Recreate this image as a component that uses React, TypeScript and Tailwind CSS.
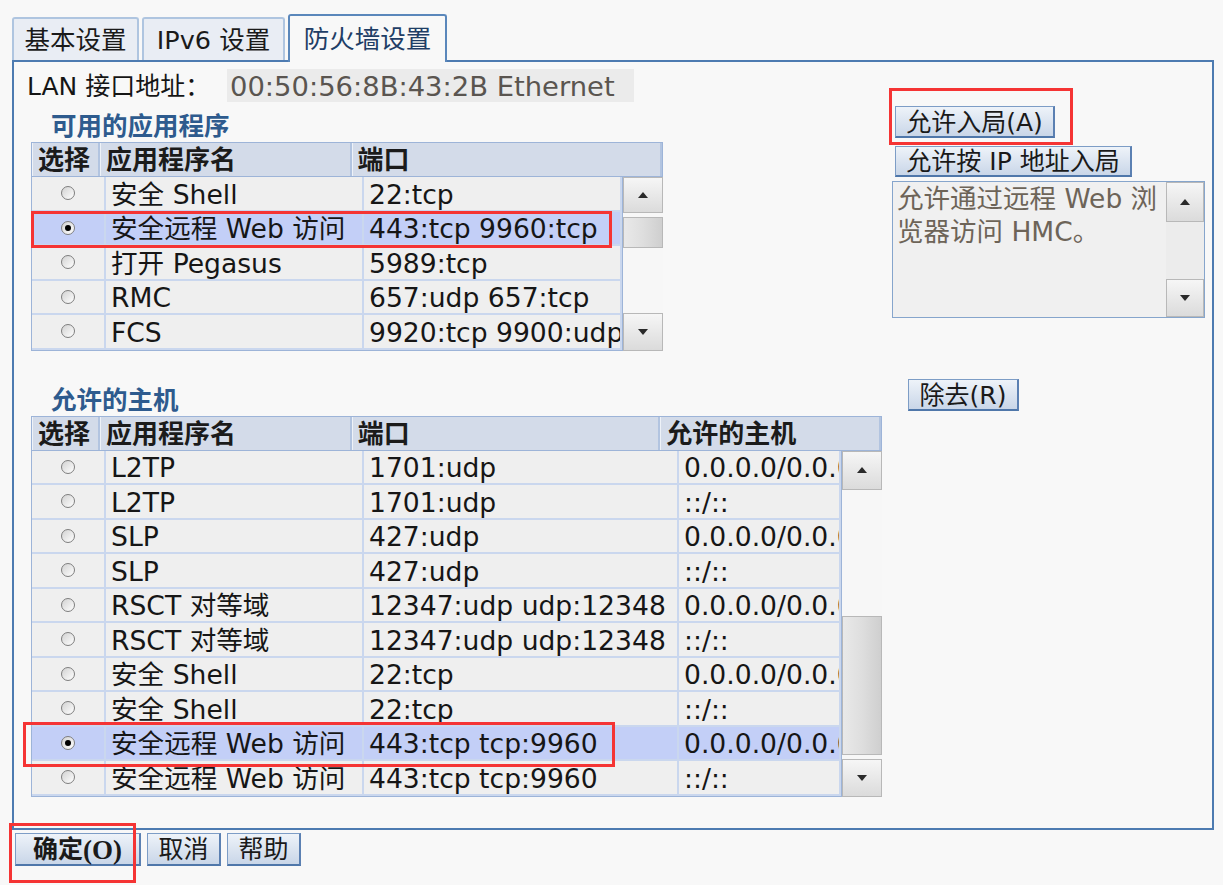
import React from 'react';

type Col = { w: number; label: string };

const APPS: string[][] = [
  ['安全 Shell', '22:tcp'],
  ['安全远程 Web 访问', '443:tcp 9960:tcp'],
  ['打开 Pegasus', '5989:tcp'],
  ['RMC', '657:udp 657:tcp'],
  ['FCS', '9920:tcp 9900:udp'],
];

const HOSTS: string[][] = [
  ['L2TP', '1701:udp', '0.0.0.0/0.0.0.0'],
  ['L2TP', '1701:udp', '::/::'],
  ['SLP', '427:udp', '0.0.0.0/0.0.0.0'],
  ['SLP', '427:udp', '::/::'],
  ['RSCT 对等域', '12347:udp udp:12348', '0.0.0.0/0.0.0.0'],
  ['RSCT 对等域', '12347:udp udp:12348', '::/::'],
  ['安全 Shell', '22:tcp', '0.0.0.0/0.0.0.0'],
  ['安全 Shell', '22:tcp', '::/::'],
  ['安全远程 Web 访问', '443:tcp tcp:9960', '0.0.0.0/0.0.0.0'],
  ['安全远程 Web 访问', '443:tcp tcp:9960', '::/::'],
];

const Radio = ({ checked }: { checked: boolean }) => (
  <span className="w-[14px] h-[14px] rounded-full border border-[#7e7e7e] bg-linear-to-br from-[#d2d2d2] to-white flex items-center justify-center">
    {checked && <span className="w-[6px] h-[6px] rounded-full bg-black" />}
  </span>
);

const Arrow = ({ up }: { up: boolean }) => (
  <svg width="10" height="6" viewBox="0 0 10 6">
    <path d={up ? 'M0 6 L5 0 L10 6 Z' : 'M0 0 L5 6 L10 0 Z'} fill="#2a2a2a" />
  </svg>
);

const ScrollBtn = ({ up, h }: { up: boolean; h: number }) => (
  <div
    className="shrink-0 border border-[#b8b8b8] bg-linear-to-b from-[#f6f6f6] to-[#dbdbdb] flex items-center justify-center"
    style={{ height: h }}
  >
    <Arrow up={up} />
  </div>
);

interface TableProps {
  headers: Col[];
  cols: number[];
  rows: string[][];
  selected: number;
  thumbTop: number;
  thumbH: number;
  upH: number;
  downH: number;
}

const DataTable: React.FC<TableProps> = ({ headers, cols, rows, selected, thumbTop, thumbH, upH, downH }) => {
  const total = headers.reduce((s, c) => s + c.w, 0);
  return (
    <div style={{ width: total }}>
      {/* Header */}
      <div className="flex h-[35px] border border-[#9db4d8] bg-[#d3dbe9]">
        {headers.map((h, i) => (
          <div
            key={i}
            className="flex items-center pl-[5px] pt-[2px] border-r-2 border-[#b2c4e0] border-l border-l-[#eef2f8] font-bold text-[26px] text-[#1b1b1b] whitespace-nowrap overflow-hidden"
            style={{ width: h.w - (i === 0 ? 1 : 0) }}
          >
            {h.label}
          </div>
        ))}
      </div>
      {/* Body */}
      <div className="flex">
        <div className="border-l border-r border-b border-[#9db4d8]">
          {rows.map((r, ri) => {
            const sel = ri === selected;
            const bg = sel ? 'bg-[#c3cff7]' : 'bg-[#efefef]';
            return (
              <div key={ri} className="flex h-[34.5px]">
                <div
                  className={`flex items-center justify-center border-r-2 border-b-2 border-[#cad7ee] ${bg}`}
                  style={{ width: cols[0] }}
                >
                  <Radio checked={sel} />
                </div>
                {r.map((c, ci) => (
                  <div
                    key={ci}
                    className={`flex items-center pl-[5px] pt-[3px] border-r-2 border-b-2 border-[#cad7ee] whitespace-nowrap overflow-hidden text-[26.6px] text-[#161616] ${bg}`}
                    style={{ width: cols[ci + 1] }}
                  >
                    {c}
                  </div>
                ))}
              </div>
            );
          })}
        </div>
        {/* Scrollbar */}
        <div className="w-[40px] flex flex-col bg-[#f7f7f7]">
          <ScrollBtn up h={upH} />
          <div style={{ height: thumbTop }} />
          <div
            className="shrink-0 border border-[#b8b8b8] bg-linear-to-r from-[#e9e9e9] via-[#dedede] to-[#cfcfcf]"
            style={{ height: thumbH }}
          />
          <div className="flex-1" />
          <ScrollBtn up={false} h={downH} />
        </div>
      </div>
    </div>
  );
};

const Btn = ({ children, w, h = 32, className = '' }: { children: React.ReactNode; w: number; h?: number; className?: string }) => (
  <button
    className={`flex items-center justify-center pt-[2px] border border-[#7d9dc6] border-b-2 border-r-2 border-b-[#4f77aa] border-r-[#5b80b2] bg-linear-to-b from-[#eef3f9] to-[#c9d6e8] text-[25px] text-[#1a1a1a] whitespace-nowrap ${className}`}
    style={{ width: w, height: h }}
  >
    {children}
  </button>
);

const RedBox = ({ l, t, w, h }: { l: number; t: number; w: number; h: number }) => (
  <div
    className="absolute border-[3px] border-[#f53434] pointer-events-none"
    style={{ left: l, top: t, width: w, height: h }}
  />
);

export default function App() {
  return (
    <div className="relative w-[1223px] h-[885px] overflow-hidden bg-[#f8f8f8] pt-[14px] pl-[12px] font-['DejaVu_Sans','Noto_Sans_CJK_SC',sans-serif]">
      {/* Tabs */}
      <div className="flex items-end gap-[3px]">
        <div className="w-[127px] h-[43px] flex items-center justify-center pt-[2px] border-2 border-b-0 border-[#afc5e0] rounded-t-[3px] bg-[#e9edf4] text-[25.5px] text-[#1a1a1a]">
          基本设置
        </div>
        <div className="w-[143px] h-[43px] flex items-center justify-center pt-[2px] border-2 border-b-0 border-[#afc5e0] rounded-t-[3px] bg-[#e9edf4] text-[25.5px] text-[#1a1a1a]">
          IPv6 设置
        </div>
        <div className="relative z-10 w-[159px] h-[48px] -mb-[2px] flex items-center justify-center border-2 border-b-0 border-[#5a87bb] rounded-t-[3px] bg-[#f8f8f8] text-[25.5px] text-[#1f3e66]">
          防火墙设置
        </div>
      </div>

      {/* Panel */}
      <div className="w-[1202px] h-[770px] border-2 border-[#4d7bb1] flex">
        {/* Left column */}
        <div className="w-[868px] flex flex-col">
          <div className="mt-[7px] ml-[13px] flex items-center h-[33px]">
            <div className="w-[200px] pt-[2px] text-[25px] text-[#151515] whitespace-nowrap">LAN 接口地址：</div>
            <div className="w-[407px] h-[33px] bg-[#ebebeb] flex items-center pl-[3px] pt-[2px] text-[27.4px] text-[#5a5550] whitespace-nowrap">
              00:50:56:8B:43:2B Ethernet
            </div>
          </div>
          <div className="mt-[9px] mb-[1px] ml-[37px] leading-[30px] text-[25.5px] font-semibold text-[#2e5b8e]">
            可用的应用程序
          </div>
          <div className="ml-[17px]">
            <DataTable
              headers={[
                { w: 69, label: '选择' },
                { w: 252, label: '应用程序名' },
                { w: 311, label: '端口' },
              ]}
              cols={[74, 258, 258]}
              rows={APPS}
              selected={1}
              upH={36}
              thumbTop={4}
              thumbH={31}
              downH={38}
            />
          </div>
          <div className="mt-[34px] mb-[1px] ml-[37px] leading-[30px] text-[25.5px] font-semibold text-[#2e5b8e]">
            允许的主机
          </div>
          <div className="ml-[17px]">
            <DataTable
              headers={[
                { w: 69, label: '选择' },
                { w: 252, label: '应用程序名' },
                { w: 309, label: '端口' },
                { w: 221, label: '允许的主机' },
              ]}
              cols={[74, 258, 315, 162]}
              rows={HOSTS}
              selected={8}
              upH={39}
              thumbTop={126}
              thumbH={139}
              downH={38}
            />
          </div>
        </div>

        {/* Right column */}
        <div className="pl-[10px] flex flex-col items-start">
          <Btn w={160} className="mt-[44px] ml-[3px]">允许入局(A)</Btn>
          <Btn w={237} h={31} className="mt-[8px] ml-[3px]">允许按 IP 地址入局</Btn>
          <div className="mt-[4px] w-[313px] h-[137px] border border-[#86a5cc] bg-[#f0f0f0] flex">
            <div className="flex-1 pl-[4px] text-[26.5px] leading-[33px] text-[#6d6458] whitespace-nowrap overflow-hidden">
              <div>允许通过远程 Web 浏</div>
              <div>览器访问 HMC。</div>
            </div>
            <div className="w-[38px] flex flex-col bg-[#ececec]">
              <ScrollBtn up h={40} />
              <div className="flex-1" />
              <ScrollBtn up={false} h={38} />
            </div>
          </div>
          <Btn w={111} className="mt-[61px] ml-[16px]">除去(R)</Btn>
        </div>
      </div>

      {/* Bottom buttons */}
      <div className="flex gap-[6px] mt-[3px] ml-[3px]">
        <Btn w={126} h={33} className="font-bold">
          确定<span className="font-['Liberation_Serif',serif] text-[27px]">(O)</span>
        </Btn>
        <Btn w={74} h={33}>取消</Btn>
        <Btn w={74} h={33}>帮助</Btn>
      </div>

      {/* Annotation boxes */}
      <RedBox l={31} t={211} w={581} h={37} />
      <RedBox l={889} t={88} w={184} h={57} />
      <RedBox l={23} t={722} w={592} h={45} />
      <RedBox l={9} t={823} w={127} h={60} />
    </div>
  );
}
